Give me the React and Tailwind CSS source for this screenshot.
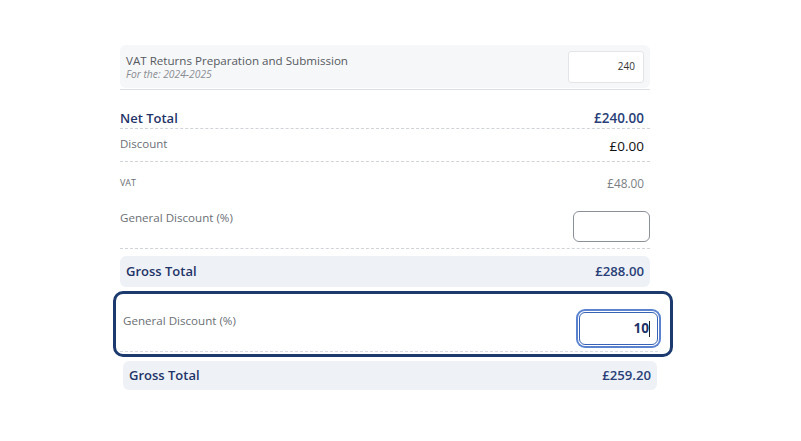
import React from "react";

export default function App() {
  const font = { fontFamily: "'Open Sans', 'Noto Sans', sans-serif" };
  return (
    <div className="w-[801px] h-[441px] bg-white overflow-hidden" style={font}>
      <div className="ml-[120px] w-[530px] pt-[45px] flex flex-col">
        {/* item card */}
        <div className="h-[43px] bg-[#f6f7f9] rounded-md flex items-center justify-between pl-[6px] pr-[6px]">
          <div className="flex flex-col">
            <span className="text-[11.6px] leading-[15px] text-[#555a60]">VAT Returns Preparation and Submission</span>
            <span className="text-[10.3px] leading-[13px] italic text-[#8a8d92]">For the: 2024-2025</span>
          </div>
          <div className="w-[76px] h-[32px] bg-white border border-[#e3e5e8] rounded-[3px] flex items-center justify-end pr-[8px] text-[10px] text-[#333]">
            240
          </div>
        </div>
        <div className="h-px bg-[#dcdfe3] mt-[1px]" />

        {/* Net Total */}
        <div className="mt-[19px] h-[20px] flex items-center justify-between border-b border-dashed border-[#d0d3d7]">
          <span className="text-[13px] font-semibold text-[#1f3468]">Net Total</span>
          <span className="text-[13.5px] font-semibold text-[#2a3f78] pr-[6px]">£240.00</span>
        </div>

        {/* Discount */}
        <div className="h-[33px] flex items-start justify-between border-b border-dashed border-[#d0d3d7]">
          <span className="mt-[7px] text-[11.5px] leading-[16px] text-[#6b6f75]">Discount</span>
          <span className="mt-[8px] text-[13.5px] leading-[18px] font-medium text-[#111] pr-[6px]">£0.00</span>
        </div>

        {/* VAT */}
        <div className="h-[42px] flex items-center justify-between">
          <span className="text-[9px] text-[#6b6f75]">VAT</span>
          <span className="text-[11.8px] text-[#7b7f85] pr-[6px] mt-[2px]">£48.00</span>
        </div>

        {/* General Discount */}
        <div className="flex items-start justify-between border-b border-dashed border-[#d0d3d7] pb-[6px]">
          <span className="mt-[6px] text-[11.6px] leading-[16px] text-[#6b6f75]">General Discount (%)</span>
          <div className="mt-[7px] w-[77px] h-[31px] bg-white border border-[#8a9098] rounded-[6px]" />
        </div>

        {/* Gross Total */}
        <div className="mt-[7px] h-[31px] bg-[#eef2f7] rounded-md flex items-center justify-between px-[6px]">
          <span className="text-[13px] font-semibold text-[#1f3468]">Gross Total</span>
          <span className="text-[13.2px] font-semibold text-[#2a3f78]">£288.00</span>
        </div>

        {/* Highlighted */}
        <div className="mt-[4px] -ml-[7px] w-[560px] h-[66px] border-[3px] border-[#1c3a6e] rounded-[10px] bg-white flex flex-col pl-[4px] pr-[12px]">
          <div className="flex items-start justify-between border-b border-dashed border-[#d8dbdf] h-[58px]">
            <span className="ml-[3px] mt-[19px] text-[11.6px] leading-[16px] text-[#6b6f75]">General Discount (%)</span>
            <div className="mt-[18px] w-[79px] h-[33px] bg-white border-[1.5px] border-[#3762b5] rounded-[6px] ring-2 ring-[#5b83d0] ring-offset-[1px] flex items-center justify-end pr-[7px]">
              <span className="text-[13.5px] font-bold text-[#1f3468]">10</span>
              <span className="w-px h-[16px] bg-[#222]" />
            </div>
          </div>
        </div>

        {/* Gross Total 2 */}
        <div className="mt-[4px] ml-[3px] w-[534px] h-[29px] bg-[#eef2f7] rounded-md flex items-center justify-between px-[6px]">
          <span className="text-[13px] font-semibold text-[#1f3468]">Gross Total</span>
          <span className="text-[13.2px] font-semibold text-[#2a3f78]">£259.20</span>
        </div>
      </div>
    </div>
  );
}
